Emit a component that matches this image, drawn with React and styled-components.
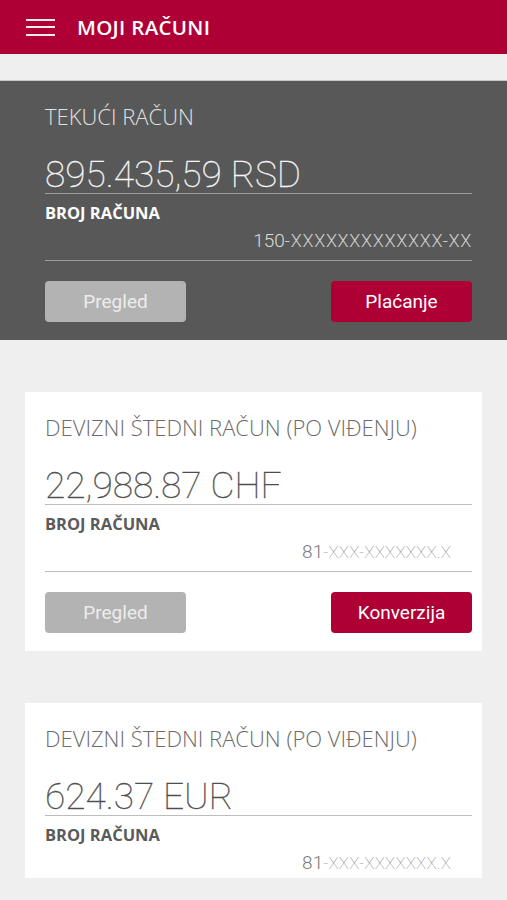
import React from "react";
import styled, { createGlobalStyle } from "styled-components";

const GlobalStyle = createGlobalStyle`
  body {
    margin: 0;
    background: #efefef;
    font-family: "Open Sans", "Liberation Sans", sans-serif;
  }
`;

const Page = styled.div`
  width: 507px;
  min-height: 900px;
  background: #efefef;
  overflow: hidden;
`;

const Header = styled.header`
  height: 54px;
  background: #af0036;
  display: flex;
  align-items: center;
  padding-left: 26px;
  gap: 22px;
  box-sizing: border-box;
`;

const Burger = styled.div`
  width: 29px;
  display: flex;
  flex-direction: column;
  gap: 5.5px;

  span {
    display: block;
    height: 2px;
    background: #fbe9ee;
  }
`;

const Title = styled.h1`
  margin: 0;
  color: #fff;
  font-size: 20.5px;
  font-weight: 600;
  letter-spacing: 0.3px;
`;

const List = styled.main`
  padding-top: 26px;
  display: flex;
  flex-direction: column;
  align-items: center;
  gap: 52px;
`;

const Card = styled.section`
  box-sizing: border-box;
  width: ${(p) => (p.$dark ? "507px" : "457px")};
  background: ${(p) => (p.$dark ? "#585858" : "#fff")};
  border-top: ${(p) => (p.$dark ? "1px solid #c9c9c9" : "none")};
  padding: 23px ${(p) => (p.$dark ? "35px" : "10px")} ${(p) => (p.$clipped ? "2px" : "18px")} ${(p) => (p.$dark ? "45px" : "20px")};
`;

const Inner = styled.div`
  width: 427px;
`;

const AccountName = styled.div`
  font-size: 22px;
  font-weight: 300;
  line-height: 26px;
  margin-top: -1px;
  margin-bottom: -1px;
  white-space: nowrap;
  color: ${(p) => (p.$dark ? "#e2e2e2" : "#6a6a6a")};
`;

const Amount = styled.div`
  margin-top: 25px;
  padding-top: 3px;
  font-family: Roboto, "Liberation Sans", sans-serif;
  font-size: 37px;
  font-weight: 100;
  line-height: 37px;
  -webkit-text-stroke: 0.3px currentColor;
  color: ${(p) => (p.$dark ? "#f6f6f6" : "#4e4e4e")};
  border-bottom: 1px solid ${(p) => (p.$dark ? "#9c9c9c" : "#bdbdbd")};
`;

const Label = styled.div`
  margin-top: 9px;
  font-size: 16.5px;
  font-weight: 700;
  line-height: 20px;
  color: ${(p) => (p.$dark ? "#fff" : "#5a5a5a")};
`;

const Number = styled.div`
  margin-top: 6px;
  padding-right: ${(p) => (p.$dark ? "0" : "21px")};
  padding-bottom: ${(p) => (p.$clipped ? "0" : "6px")};
  text-align: right;
  white-space: nowrap;
  font-family: Roboto, "Liberation Sans", sans-serif;
  font-weight: 300;
  line-height: 24px;
  border-bottom: ${(p) =>
    p.$clipped ? "none" : `1px solid ${p.$dark ? "#9c9c9c" : "#bdbdbd"}`};
`;

const Digits = styled.span`
  font-size: 19px;
  color: ${(p) => (p.$dark ? "#dcdcdc" : "#7a7a7a")};
`;

const Masked = styled.span`
  font-size: ${(p) => (p.$dark ? "18px" : "17px")};
  font-weight: ${(p) => (p.$dark ? 300 : 100)};
  letter-spacing: ${(p) => (p.$dark ? "0.7px" : "0.2px")};
  color: ${(p) => (p.$dark ? "#cfcfcf" : "#8a8a8a")};
`;

const Actions = styled.div`
  margin-top: 20px;
  display: flex;
  justify-content: space-between;
`;

const Button = styled.button`
  width: 141px;
  height: 41px;
  border: none;
  border-radius: 4px;
  background: ${(p) => (p.$primary ? "#af0036" : "#b3b3b3")};
  color: ${(p) => (p.$primary ? "#fff" : "#ededed")};
  font-family: Roboto, "Liberation Sans", sans-serif;
  font-size: 19px;
  padding: 0;
  cursor: pointer;
`;

const accounts = [
  {
    name: "TEKUĆI RAČUN",
    amount: "895.435,59 RSD",
    prefix: "150",
    masked: "-XXXXXXXXXXXXX-XX",
    action: "Plaćanje",
    dark: true,
  },
  {
    name: "DEVIZNI ŠTEDNI RAČUN (PO VIĐENJU)",
    amount: "22,988.87 CHF",
    prefix: "81",
    masked: "-XXX-XXXXXXX.X",
    action: "Konverzija",
  },
  {
    name: "DEVIZNI ŠTEDNI RAČUN (PO VIĐENJU)",
    amount: "624.37 EUR",
    prefix: "81",
    masked: "-XXX-XXXXXXX.X",
    clipped: true,
  },
];

const AccountCard = ({ a }) => (
  <Card $dark={a.dark} $clipped={a.clipped}>
    <Inner>
      <AccountName $dark={a.dark}>{a.name}</AccountName>
      <Amount $dark={a.dark}>{a.amount}</Amount>
      <Label $dark={a.dark}>BROJ RAČUNA</Label>
      <Number $dark={a.dark} $clipped={a.clipped}>
        <Digits $dark={a.dark}>{a.prefix}</Digits>
        <Masked $dark={a.dark}>{a.masked}</Masked>
      </Number>
      {!a.clipped && (
        <Actions>
          <Button>Pregled</Button>
          <Button $primary>{a.action}</Button>
        </Actions>
      )}
    </Inner>
  </Card>
);

export default function App() {
  return (
    <Page>
      <GlobalStyle />
      <Header>
        <Burger>
          <span />
          <span />
          <span />
        </Burger>
        <Title>MOJI RAČUNI</Title>
      </Header>
      <List>
        {accounts.map((a, i) => (
          <AccountCard key={i} a={a} />
        ))}
      </List>
    </Page>
  );
}
